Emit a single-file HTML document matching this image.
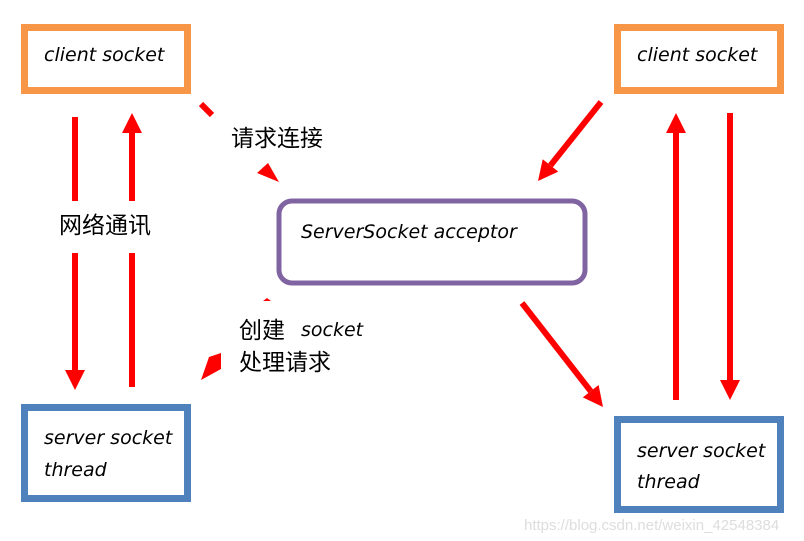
<!DOCTYPE html>
<html><head><meta charset="utf-8"><style>
html,body{margin:0;padding:0;background:#fff;}
svg{display:block}
.it{font-style:italic;fill:#000;font-family:"DejaVu Sans","Liberation Sans",sans-serif;font-size:19px}
.cn{font-size:23px;fill:#000;font-family:"Noto Sans CJK SC","WenQuanYi Zen Hei",sans-serif}
</style></head><body>
<svg width="804" height="541" viewBox="0 0 804 541" xmlns="http://www.w3.org/2000/svg">
<rect x="24.5" y="27.5" width="163" height="63" fill="#fff" stroke="#F79646" stroke-width="7"/>
<rect x="617.5" y="27.5" width="163" height="63" fill="#fff" stroke="#F79646" stroke-width="7"/>
<rect x="24.5" y="407.5" width="163" height="91" fill="#fff" stroke="#4F81BD" stroke-width="7"/>
<rect x="617.5" y="419.5" width="163" height="90" fill="#fff" stroke="#4F81BD" stroke-width="7"/>
<rect x="279" y="201" width="306" height="82" rx="13" fill="#fff" stroke="#8064A2" stroke-width="5"/>
<text class="it" x="44" y="61">client socket</text>
<text class="it" x="637" y="61">client socket</text>
<text class="it" x="44" y="444">server socket</text>
<text class="it" x="44" y="476">thread</text>
<text class="it" x="637" y="457">server socket</text>
<text class="it" x="637" y="488">thread</text>
<text class="it" x="301" y="238">ServerSocket acceptor</text>
<g stroke="#f00" stroke-width="6" fill="none">
<line x1="75" y1="117" x2="75" y2="201"/>
<line x1="75" y1="253" x2="75" y2="372"/>
<line x1="132" y1="387" x2="132" y2="253"/>
<line x1="132" y1="201" x2="132" y2="131"/>
<line x1="676" y1="400" x2="676" y2="131"/>
<line x1="730" y1="113" x2="730" y2="382"/>
<line x1="601" y1="102" x2="550.5" y2="165.4"/>
<line x1="522" y1="303" x2="590.7" y2="391.2"/>
<line x1="201" y1="104" x2="212" y2="115"/>
</g>
<g fill="#f00">
<path d="M65,370 L85,370 L75,390 Z"/>
<path d="M122,133 L142,133 L132,113 Z"/>
<path d="M666,133 L686,133 L676,113 Z"/>
<path d="M720,380 L740,380 L730,400 Z"/>
<path d="M558.3,171.6 L542.7,159.2 L538,181 Z"/>
<path d="M598.6,385 L582.8,397.4 L603,407 Z"/>
<path d="M257,173 L268,163 L279,182 Z"/>
<path d="M263,301 L267,298 L271,301 Z"/>
<path d="M201,380 L209,357 L221,353 L221,369 Z"/>
</g>
<text class="cn" x="231" y="146">请求连接</text>
<text class="cn" x="59" y="233">网络通讯</text>
<text class="cn" x="239" y="338">创建</text>
<text class="it" x="301" y="336">socket</text>
<text class="cn" x="239" y="370">处理请求</text>
<text x="524" y="530" font-size="15" fill="#ddd" font-family="Liberation Sans,sans-serif">https://blog.csdn.net/weixin_42548384</text>
</svg>
</body></html>
